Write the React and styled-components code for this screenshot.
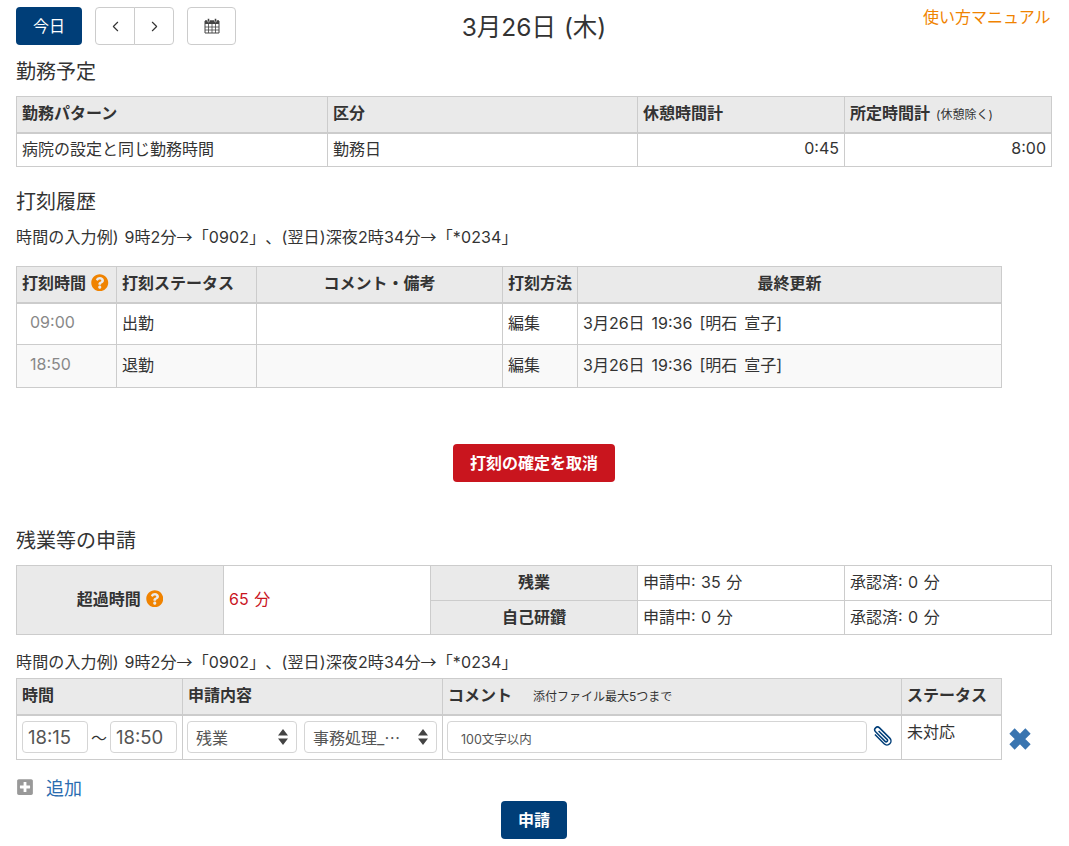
import React from 'react';
import styled, { createGlobalStyle } from 'styled-components';
import { FaPlusSquare, FaQuestionCircle } from 'react-icons/fa';
import { ChevronLeft, ChevronRight } from 'lucide-react';

const navy = '#003e78';
const orange = '#f08300';
const border = '#ccc';

const GlobalStyle = createGlobalStyle`
  html, body {
    margin: 0;
    background: #fff;
    color: #333;
    font-family: Inter, "Noto Sans CJK JP", sans-serif;
    font-size: 16px;
    text-spacing-trim: space-all;
    word-spacing: 1px;
  }
`;

const Page = styled.div`
  width: 1069px;
  height: 846px;
  padding: 7px 17px 0 16px;
  box-sizing: border-box;
  overflow: hidden;
`;

const Toolbar = styled.div`
  display: grid;
  grid-template-columns: 1fr auto 1fr;
  align-items: start;
  height: 38px;
`;

const ToolGroup = styled.div`
  display: flex;
  gap: 13px;
`;

const DateTitle = styled.div`
  font-size: 24.5px;
  line-height: 40px;
`;

const ManualLink = styled.a`
  justify-self: end;
  margin-right: 1.5px;
  color: ${orange};
  font-size: 16px;
  line-height: 21px;
`;

const PrimaryButton = styled.button`
  width: ${(p) => p.$width}px;
  height: 38px;
  padding: 0 0 3px;
  border: 0;
  border-radius: 4px;
  background: ${(p) => p.$bg || navy};
  color: #fff;
  font: inherit;
  font-weight: ${(p) => (p.$bold ? 700 : 400)};
`;

const OutlineButton = styled.button`
  display: flex;
  align-items: center;
  justify-content: center;
  width: ${(p) => p.$width}px;
  height: 38px;
  padding: 0;
  border: 1px solid ${border};
  border-radius: ${(p) => p.$radius || '4px'};
  margin-left: ${(p) => p.$ml || 0};
  background: #fff;
  color: #333;
`;

const Pager = styled.div`
  display: flex;
`;

const Heading = styled.h2`
  margin: ${(p) => p.$mt}px 0 ${(p) => p.$mb}px;
  font-size: 20px;
  font-weight: 400;
  line-height: 28px;
`;

const Note = styled.p`
  margin: ${(p) => p.$mt}px 0 ${(p) => p.$mb}px;
  letter-spacing: 0.13px;
  line-height: 22px;
`;

const Arrow = styled.span`
  font-family: "Noto Sans CJK JP", sans-serif;
`;

const Table = styled.table`
  width: ${(p) => p.$width}px;
  border-collapse: collapse;
  table-layout: fixed;
`;

const Th = styled.th`
  height: ${(p) => p.$height || 36}px;
  padding: 0 5px 4px;
  border: 1px solid ${border};
  border-bottom-width: ${(p) => (p.$flat ? 1 : 2)}px;
  background: #eaeaea;
  font-weight: 700;
  text-align: ${(p) => p.$align || 'left'};
  box-sizing: border-box;
`;

const Td = styled.td`
  height: ${(p) => p.$height || 34}px;
  padding: 0 ${(p) => p.$padX ?? 5}px 4px;
  border: 1px solid ${border};
  background: ${(p) => p.$bg || '#fff'};
  color: ${(p) => p.$color || 'inherit'};
  text-align: ${(p) => p.$align || 'left'};
  box-sizing: border-box;
`;

const FieldCell = styled(Td)`
  padding: 0 ${(p) => p.$padX ?? 5}px;
`;

const StatusCell = styled(Td)`
  padding: 3px 5px 0;
  vertical-align: top;
`;

const UpdatedCell = styled(Td)`
  word-spacing: 2.5px;
`;

const SmallNote = styled.span`
  margin-left: ${(p) => p.$ml || 0}px;
  font-size: 12px;
  font-weight: 400;
`;

const TimeCell = styled(Td)`
  padding-left: 13px;
  color: #888;
`;

const Help = styled(FaQuestionCircle)`
  margin-left: 5px;
  color: ${orange};
  font-size: 17.5px;
  vertical-align: -2px;
`;

const Centered = styled.div`
  display: flex;
  justify-content: center;
  margin-top: ${(p) => p.$mt}px;
`;

const RequestRow = styled.div`
  display: flex;
  align-items: flex-end;
`;

const RemoveButton = styled.span`
  display: flex;
  margin: 0 0 9px 6px;
`;

const FieldRow = styled.div`
  display: flex;
  align-items: center;
  gap: ${(p) => p.$gap || 0}px;
`;

const TextBox = styled.div`
  display: flex;
  align-items: center;
  flex: none;
  width: ${(p) => p.$width}px;
  height: 32px;
  padding: 0 6px;
  border: 1px solid #d5d5d5;
  border-radius: 4px;
  background: #fff;
  box-sizing: border-box;
  color: #555;
  font-size: 16px;
  white-space: nowrap;
`;

const TimeBox = styled(TextBox)`
  padding: 0 0 0 5px;
  font-size: 18.5px;
`;

const CommentBox = styled(TextBox)`
  padding: 3px 13px 0;
  font-size: 12.5px;
`;

const SelectBox = styled(TextBox)`
  justify-content: space-between;
  padding: 0 7px 0 8px;
`;

const Tilde = styled.span`
  width: 22px;
  text-align: center;
`;

const AddRow = styled.div`
  display: flex;
  align-items: center;
  gap: 12px;
  height: 24px;
  margin-top: 15px;
  color: #2a6cb0;
  font-size: 18px;
`;

const AddIcon = styled(FaPlusSquare)`
  color: #999;
  font-size: 18px;
`;

function CalendarIcon() {
  return (
    <svg width="16" height="16" viewBox="0 0 16 16" fill="#444">
      <path d="M1 3h14v12H1z" fill="none" stroke="#444" strokeWidth="1" />
      <path d="M1 2.500h14V6H1z" />
      <path d="M1 9h14M1 12h14M4.500 6v9M8 6v9M11.500 6v9" stroke="#444" strokeWidth="0.8" />
      <rect x="3.500" y="0.500" width="2" height="3.500" rx="1" stroke="#fff" strokeWidth="0.5" />
      <rect x="10.500" y="0.500" width="2" height="3.500" rx="1" stroke="#fff" strokeWidth="0.5" />
    </svg>
  );
}

function SelectArrows() {
  return (
    <svg width="12" height="18" viewBox="0 0 12 18" fill="#444">
      <path d="M6 1l5 6.500H1zM6 17l-5-6.500h10z" />
    </svg>
  );
}

function ClipIcon() {
  return (
    <svg width="22" height="22" viewBox="0 0 22 22" fill="none" stroke={navy} strokeWidth="1.5" style={{ flex: 'none', margin: '0 0 3px 4px' }}>
      <path transform="rotate(-45 11 11)" d="M7 5v13a4 4 0 0 0 8 0V3.500a2.800 2.800 0 0 0-5.600 0V17a1.400 1.400 0 0 0 2.800 0V5" />
    </svg>
  );
}

function RemoveIcon() {
  return (
    <svg width="24" height="24" viewBox="0 0 24 24" fill="none" stroke="#3a75b0" strokeWidth="7.500">
      <path d="M4 4l16 16M20 4L4 20" />
    </svg>
  );
}

const Cols = ({ widths }) => (
  <colgroup>
    {widths.map((w, i) => (
      <col key={i} width={w} />
    ))}
  </colgroup>
);

function InputNote({ mt, mb }) {
  return (
    <Note $mt={mt} $mb={mb}>
      時間の入力例) 9時2分<Arrow>→</Arrow>「0902」、(翌日)深夜2時34分<Arrow>→</Arrow>「*0234」
    </Note>
  );
}

export default function App() {
  return (
    <Page lang="ja">
      <GlobalStyle />
      <Toolbar>
        <ToolGroup>
          <PrimaryButton $width={66}>今日</PrimaryButton>
          <Pager>
            <OutlineButton $width={40} $radius="4px 0 0 4px"><ChevronLeft size={17} strokeWidth={1.6} /></OutlineButton>
            <OutlineButton $width={40} $radius="0 4px 4px 0" $ml="-1px"><ChevronRight size={17} strokeWidth={1.6} /></OutlineButton>
          </Pager>
          <OutlineButton $width={49}><CalendarIcon /></OutlineButton>
        </ToolGroup>
        <DateTitle>3月26日 (木)</DateTitle>
        <ManualLink>使い方マニュアル</ManualLink>
      </Toolbar>

      <Heading $mt={13} $mb={10}>勤務予定</Heading>
      <Table $width={1035}>
        <Cols widths={[311, 310, 207, 207]} />
        <thead>
          <tr>
            <Th>勤務パターン</Th>
            <Th>区分</Th>
            <Th>休憩時間計</Th>
            <Th>所定時間計<SmallNote $ml={6}>(休憩除く)</SmallNote></Th>
          </tr>
        </thead>
        <tbody>
          <tr>
            <Td>病院の設定と同じ勤務時間</Td>
            <Td>勤務日</Td>
            <Td $align="right">0:45</Td>
            <Td $align="right">8:00</Td>
          </tr>
        </tbody>
      </Table>

      <Heading $mt={21} $mb={9}>打刻履歴</Heading>
      <InputNote mt={0} mb={18} />
      <Table $width={985}>
        <Cols widths={[100, 140, 246, 75, 424]} />
        <thead>
          <tr>
            <Th>打刻時間<Help /></Th>
            <Th>打刻ステータス</Th>
            <Th $align="center">コメント・備考</Th>
            <Th>打刻方法</Th>
            <Th $align="center">最終更新</Th>
          </tr>
        </thead>
        <tbody>
          <tr>
            <TimeCell $height={42}>09:00</TimeCell>
            <Td $height={42}>出勤</Td>
            <Td $height={42} />
            <Td $height={42}>編集</Td>
            <UpdatedCell $height={42}>3月26日 19:36 [明石 宣子]</UpdatedCell>
          </tr>
          <tr>
            <TimeCell $height={43} $bg="#f9f9f9">18:50</TimeCell>
            <Td $height={43} $bg="#f9f9f9">退勤</Td>
            <Td $height={43} $bg="#f9f9f9" />
            <Td $height={43} $bg="#f9f9f9">編集</Td>
            <UpdatedCell $height={43} $bg="#f9f9f9">3月26日 19:36 [明石 宣子]</UpdatedCell>
          </tr>
        </tbody>
      </Table>

      <Centered $mt={56}>
        <PrimaryButton $width={162} $bg="#c9151e" $bold>打刻の確定を取消</PrimaryButton>
      </Centered>

      <Heading $mt={45} $mb={10}>残業等の申請</Heading>
      <Table $width={1035}>
        <Cols widths={[207, 207, 207, 207, 207]} />
        <tbody>
          <tr>
            <Th rowSpan={2} $flat $align="center">超過時間<Help /></Th>
            <Td rowSpan={2} $color="#c9151e">65 分</Td>
            <Th $flat $height={35} $align="center">残業</Th>
            <Td $height={35}>申請中: 35 分</Td>
            <Td $height={35}>承認済: 0 分</Td>
          </tr>
          <tr>
            <Th $flat $height={34} $align="center">自己研鑽</Th>
            <Td $height={34}>申請中: 0 分</Td>
            <Td $height={34}>承認済: 0 分</Td>
          </tr>
        </tbody>
      </Table>

      <InputNote mt={15} mb={5} />
      <RequestRow>
        <Table $width={985}>
          <Cols widths={[166, 260, 459, 100]} />
          <thead>
            <tr>
              <Th>時間</Th>
              <Th>申請内容</Th>
              <Th>コメント<SmallNote $ml={21}>添付ファイル最大5つまで</SmallNote></Th>
              <Th>ステータス</Th>
            </tr>
          </thead>
          <tbody>
            <tr>
              <FieldCell $height={45}>
                <FieldRow>
                  <TimeBox $width={66}>18:15</TimeBox>
                  <Tilde>〜</Tilde>
                  <TimeBox $width={67}>18:50</TimeBox>
                </FieldRow>
              </FieldCell>
              <FieldCell $height={45} $padX={4}>
                <FieldRow $gap={7}>
                  <SelectBox $width={110}>残業<SelectArrows /></SelectBox>
                  <SelectBox $width={133}>事務処理_⋯<SelectArrows /></SelectBox>
                </FieldRow>
              </FieldCell>
              <FieldCell $height={45} $padX={4}>
                <FieldRow>
                  <CommentBox $width={420}>100文字以内</CommentBox>
                  <ClipIcon />
                </FieldRow>
              </FieldCell>
              <StatusCell $height={45}>未対応</StatusCell>
            </tr>
          </tbody>
        </Table>
        <RemoveButton><RemoveIcon /></RemoveButton>
      </RequestRow>

      <AddRow><AddIcon />追加</AddRow>

      <Centered $mt={2}>
        <PrimaryButton $width={66} $bold>申請</PrimaryButton>
      </Centered>
    </Page>
  );
}
